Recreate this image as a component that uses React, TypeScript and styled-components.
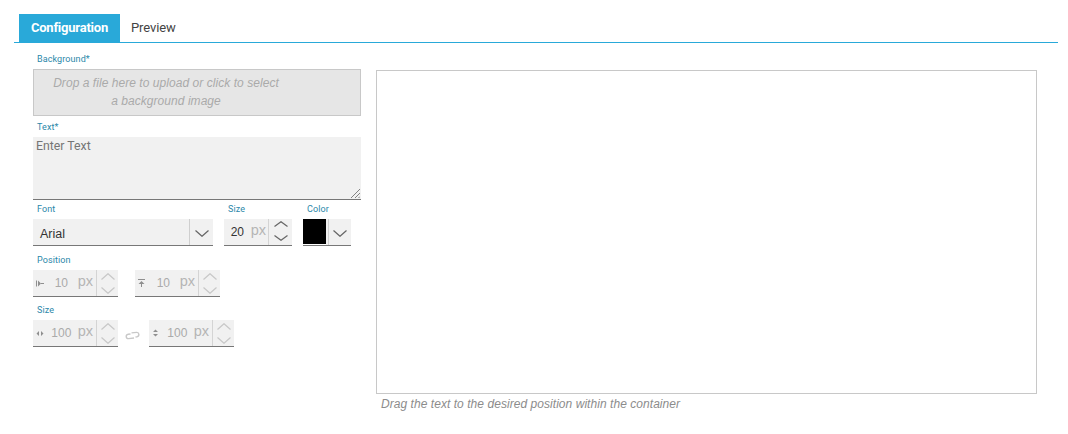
import React from "react";
import styled, { createGlobalStyle } from "styled-components";

const Global = createGlobalStyle`
  html, body { margin: 0; padding: 0; background: #fff; }
  body { font-family: Roboto, "Liberation Sans", sans-serif; }
`;

const Page = styled.div`
  width: 1044px;
  padding: 14px 0 0 14px;
`;

const TabBar = styled.div`
  display: flex;
  height: 28px;
  padding-left: 5px;
  border-bottom: 1px solid #29a9d9;
`;

const Tab = styled.div<{ $active?: boolean }>`
  box-sizing: border-box;
  height: 28px;
  width: ${(p) => (p.$active ? "101px" : "auto")};
  padding: 0 ${(p) => (p.$active ? 0 : 11)}px 2px;
  display: flex;
  align-items: center;
  justify-content: center;
  font-size: 13px;
  letter-spacing: ${(p) => (p.$active ? "-0.22px" : "-0.1px")};
  font-weight: ${(p) => (p.$active ? 700 : 400)};
  color: ${(p) => (p.$active ? "#fff" : "#444")};
  background: ${(p) => (p.$active ? "#29a9d9" : "transparent")};
`;

const Content = styled.div`
  display: flex;
  padding: 11px 0 0 19px;
  gap: 15px;
`;

const Form = styled.div`
  width: 328px;
  flex: none;
  display: flex;
  flex-direction: column;
`;

const Label = styled.div`
  height: 11px;
  line-height: 11px;
  font-size: 9px;
  letter-spacing: 0.1px;
  color: #2b87a9;
  padding-left: 4px;
  margin-bottom: 4px;
`;

const Dropzone = styled.div`
  box-sizing: border-box;
  height: 47px;
  background: #e6e6e6;
  border: 1px solid #c8c8c8;
  padding-top: 4px;
`;

const DropText = styled.div`
  width: 264px;
  text-align: center;
  font-family: "Liberation Sans", sans-serif;
  font-style: italic;
  font-size: 12px;
  letter-spacing: 0.05px;
  line-height: 18px;
  color: #aaa;
`;

const TextBox = styled.div`
  position: relative;
  box-sizing: border-box;
  height: 63px;
  background: #f1f1f1;
  border-bottom: 1px solid #777;
  padding: 2px 3px;
  font-size: 12.3px;
  line-height: 14px;
  color: #757575;
`;

const Grip = styled.svg`
  position: absolute;
  right: 1px;
  bottom: 1px;
`;

const FontRow = styled.div`
  display: flex;
  margin-top: 4px;
`;

const Column = styled.div<{ $w: number; $ml?: number }>`
  width: ${(p) => p.$w}px;
  margin-left: ${(p) => p.$ml ?? 0}px;
  flex: none;
`;

const Field = styled.div`
  box-sizing: border-box;
  height: 27px;
  display: flex;
  align-items: stretch;
  background: #f1f1f1;
  border-bottom: 1px solid #777;
`;

const FontValue = styled.div`
  flex: 1;
  padding: 7px 0 0 7px;
  font-family: "Liberation Sans", sans-serif;
  font-size: 12.5px;
  line-height: 16px;
  color: #333;
`;

const DropButton = styled.div<{ $w: number }>`
  width: ${(p) => p.$w}px;
  border-left: 1px solid #cfcfcf;
  display: flex;
  align-items: center;
  justify-content: center;
  padding-top: 2px;
  box-sizing: border-box;
`;

const Swatch = styled.div`
  width: 23px;
  height: 25px;
  margin-right: 2px;
  background: #000;
`;

const ColorField = styled(Field)`
  background: linear-gradient(#f1f1f1, #f1f1f1) no-repeat right top / 25px 100%;
  background-color: #fff;
`;

const SpinBox = styled(Field)<{ $w: number; $lead?: number }>`
  width: ${(p) => p.$w}px;
  flex: none;
  padding-left: ${(p) => p.$lead ?? 0}px;
`;

const AdornSlot = styled.div`
  width: 12px;
  padding-left: 3px;
  flex: none;
  display: flex;
  align-items: center;
`;

const Num = styled.div<{ $off?: boolean }>`
  flex: 1;
  text-align: center;
  font-family: "Liberation Sans", sans-serif;
  font-size: 12px;
  line-height: 27px;
  color: ${(p) => (p.$off ? "#aaa" : "#333")};
`;

const Unit = styled.div<{ $mr: number }>`
  font-family: "Liberation Sans", sans-serif;
  font-size: 14.5px;
  line-height: 23px;
  margin-left: 3px;
  margin-right: ${(p) => p.$mr}px;
  color: #b5b5b5;
`;

const Spinner = styled.div<{ $w: number; $pad: string }>`
  width: ${(p) => p.$w}px;
  flex: none;
  border-left: 1px solid #d4d4d4;
  display: flex;
  flex-direction: column;
  align-items: center;
  justify-content: space-between;
  padding: ${(p) => p.$pad};
  box-sizing: border-box;
`;

const GroupRow = styled.div<{ $gap?: number }>`
  display: flex;
  align-items: center;
  gap: ${(p) => p.$gap ?? 0}px;
`;

const RowGap = styled.div<{ $h: number }>`
  height: ${(p) => p.$h}px;
  flex: none;
`;

const LinkSlot = styled.div`
  width: 31px;
  flex: none;
  display: flex;
  align-items: center;
  justify-content: center;
  padding: 3px 2px 0 0;
  box-sizing: border-box;
`;

const PreviewCol = styled.div`
  width: 661px;
  flex: none;
`;

const Canvas = styled.div`
  box-sizing: border-box;
  height: 324px;
  margin-top: 16px;
  background: #fff;
  border: 1px solid #c8c8c8;
`;

const Hint = styled.div`
  padding: 3px 0 0 5px;
  font-family: "Liberation Sans", sans-serif;
  font-style: italic;
  font-size: 12px;
  letter-spacing: 0.05px;
  line-height: 14px;
  color: #8c8c8c;
`;

const Chevron = ({ up, w = 14, h = 7, c = "#666" }: { up?: boolean; w?: number; h?: number; c?: string }) => (
  <svg width={w} height={h} viewBox={`0 0 ${w} ${h}`} style={{ display: "block" }}>
    <path
      d={up ? `M0.5 ${h - 0.5}L${w / 2} 0.7L${w - 0.5} ${h - 0.5}` : `M0.5 0.5L${w / 2} ${h - 0.7}L${w - 0.5} 0.5`}
      fill="none"
      stroke={c}
      strokeWidth="1.2"
    />
  </svg>
);

const Spin = ({ off }: { off?: boolean }) => {
  const c = off ? "#c8c8c8" : "#666";
  const h = off ? 7 : 6;
  return (
    <Spinner $w={off ? 22 : 24} $pad={off ? "3px 0 2px" : "2px 0 4px"}>
      <Chevron up w={14} h={h} c={c} />
      <Chevron w={14} h={h} c={c} />
    </Spinner>
  );
};

const IconSvg = styled.svg`
  display: block;
`;

const iconLeft = (
  <IconSvg width="8" height="7" viewBox="0 0 8 7">
    <path d="M0 0.5H1V6.5H0ZM2 0.5L5 3.5L2 6.5ZM5 3H8V4H5Z" fill="#8f8f8f" />
  </IconSvg>
);
const iconTop = (
  <IconSvg width="7" height="8" viewBox="0 0 7 8">
    <path d="M0 0H7V1H0ZM0.5 5L3.5 2L6.5 5H4V8H3V5Z" fill="#8f8f8f" />
  </IconSvg>
);
const iconWidth = (
  <IconSvg width="8" height="7" viewBox="0 0 8 7">
    <path d="M3 1L0.5 3.5L3 6ZM5 1L7.5 3.5L5 6Z" fill="#8f8f8f" />
  </IconSvg>
);
const iconHeight = (
  <IconSvg width="7" height="8" viewBox="0 0 7 8">
    <path d="M1 3L3.5 0.5L6 3ZM1 5L3.5 7.5L6 5Z" fill="#8f8f8f" />
  </IconSvg>
);

const Small = ({ icon, value }: { icon: React.ReactNode; value: string }) => (
  <SpinBox $w={85}>
    <AdornSlot>{icon}</AdornSlot>
    <Num $off>{value}</Num>
    <Unit $mr={3}>px</Unit>
    <Spin off />
  </SpinBox>
);

export default function App() {
  return (
    <Page>
      <Global />
      <TabBar>
        <Tab $active>Configuration</Tab>
        <Tab>Preview</Tab>
      </TabBar>
      <Content>
        <Form>
          <Label>Background*</Label>
          <Dropzone>
            <DropText>
              Drop a file here to upload or click to select
              <br />a background image
            </DropText>
          </Dropzone>
          <RowGap $h={6} />
          <Label>Text*</Label>
          <TextBox>
            Enter Text
            <Grip width="9" height="9" viewBox="0 0 9 9">
              <path d="M0 9L9 0M4 9L9 4M7.5 9L9 7.5" stroke="#666" strokeWidth="0.8" fill="none" />
            </Grip>
          </TextBox>
          <FontRow>
            <Column $w={180}>
              <Label>Font</Label>
              <Field>
                <FontValue>Arial</FontValue>
                <DropButton $w={24}>
                  <Chevron w={14} c="#666" />
                </DropButton>
              </Field>
            </Column>
            <Column $w={68} $ml={11}>
              <Label>Size</Label>
              <SpinBox $w={68} $lead={3}>
                <Num>20</Num>
                <Unit $mr={2}>px</Unit>
                <Spin />
              </SpinBox>
            </Column>
            <Column $w={48} $ml={11}>
              <Label>Color</Label>
              <ColorField>
                <Swatch />
                <DropButton $w={23}>
                  <Chevron w={14} c="#666" />
                </DropButton>
              </ColorField>
            </Column>
          </FontRow>
          <RowGap $h={9} />
          <Label>Position</Label>
          <GroupRow $gap={17}>
            <Small icon={iconLeft} value="10" />
            <Small icon={iconTop} value="10" />
          </GroupRow>
          <RowGap $h={8} />
          <Label>Size</Label>
          <GroupRow>
            <Small icon={iconWidth} value="100" />
            <LinkSlot>
              <svg width="15" height="9" viewBox="0 0 15 9">
                <path
                  d="M5.5 3L3.2 3.3C0.4 3.8 0.6 7.9 3.5 7.6L9 7M6.5 1.9L11.5 1.4C14.5 1.2 14.6 5.2 12 5.8L10.5 6"
                  fill="none"
                  stroke="#c8c8c8"
                  strokeWidth="1.4"
                />
              </svg>
            </LinkSlot>
            <Small icon={iconHeight} value="100" />
          </GroupRow>
        </Form>
        <PreviewCol>
          <Canvas />
          <Hint>Drag the text to the desired position within the container</Hint>
        </PreviewCol>
      </Content>
    </Page>
  );
}
